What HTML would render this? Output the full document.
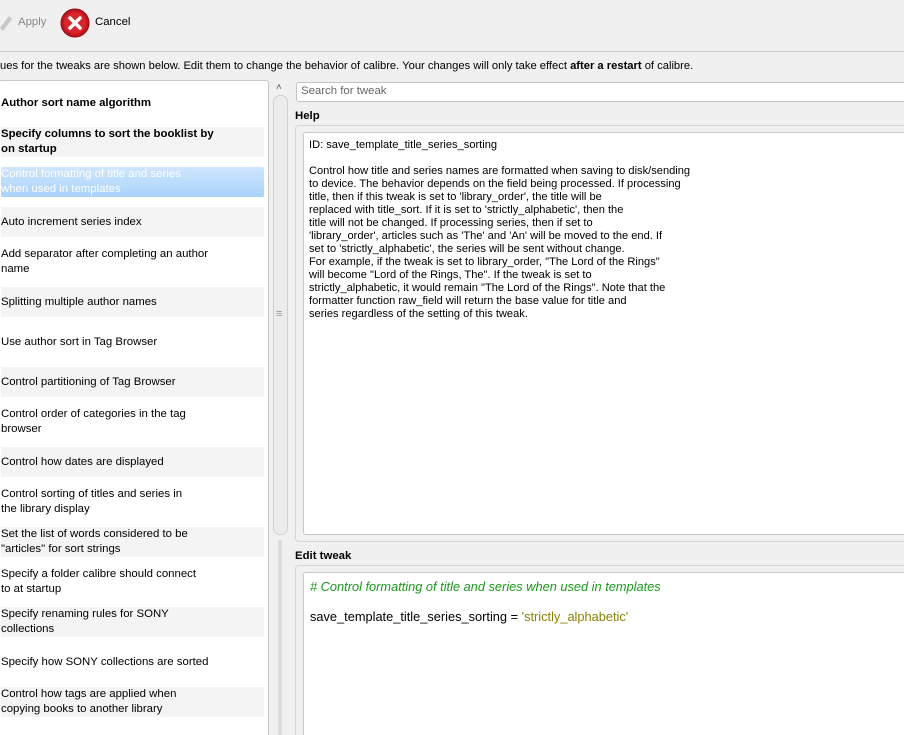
<!DOCTYPE html>
<html style="width:904px;height:735px;overflow:hidden"><head><style>
*{margin:0;padding:0;box-sizing:border-box}
body{width:904px;height:735px;overflow:hidden;background:#f0f0f0;font-family:"Liberation Sans",sans-serif;font-size:11.4px;color:#000;position:relative}
.abs{position:absolute}
.row{position:absolute;left:0;width:263px;height:30px;line-height:15px;display:flex;align-items:center;white-space:nowrap}
.sh{background:#f4f4f4}
.sel{background:linear-gradient(#cfe6fd,#a9d3fb);color:#fff;border-radius:2px}
</style></head><body>
<div class="abs" style="left:0;top:0;width:904px;height:52px;background:#f0f0f0;border-bottom:1px solid #c8c8c8"></div>
<svg class="abs" style="left:0;top:12px" width="14" height="22"><path d="M0 16 L9 4 L12 7 L3 19 Z" fill="#c8c8c8"/></svg>
<div class="abs" style="left:18px;top:16px;color:#888">Apply</div>
<svg class="abs" style="left:60px;top:8px" width="30" height="30"><circle cx="15" cy="15" r="14" fill="#c8141c" stroke="#8a0c10"/><circle cx="15" cy="15" r="11" fill="#d8262c"/><path d="M10 10 L20 20 M20 10 L10 20" stroke="#fff" stroke-width="3.5" stroke-linecap="round"/></svg>
<div class="abs" style="left:95px;top:16px">Cancel</div>
<div class="abs" style="left:0;top:60px;white-space:nowrap;font-size:11.2px">ues for the tweaks are shown below. Edit them to change the behavior of calibre. Your changes will only take effect <b>after a restart</b> of calibre.</div>
<div class="abs" style="left:-2px;top:80px;width:271px;height:660px;background:#fff;border:1px solid #c8c8c8;border-radius:3px;overflow:hidden">
<div style="position:relative;left:2px;top:-80px">
<div class="row" style="top:87px;font-weight:bold">Author sort name algorithm</div>
<div class="row sh" style="top:126px;font-weight:bold">Specify columns to sort the booklist by<br>on startup</div>
<div class="row sel" style="top:166px">Control formatting of title and series<br>when used in templates</div>
<div class="row sh" style="top:206px">Auto increment series index</div>
<div class="row" style="top:246px">Add separator after completing an author<br>name</div>
<div class="row sh" style="top:286px">Splitting multiple author names</div>
<div class="row" style="top:326px">Use author sort in Tag Browser</div>
<div class="row sh" style="top:366px">Control partitioning of Tag Browser</div>
<div class="row" style="top:406px">Control order of categories in the tag<br>browser</div>
<div class="row sh" style="top:446px">Control how dates are displayed</div>
<div class="row" style="top:486px">Control sorting of titles and series in<br>the library display</div>
<div class="row sh" style="top:526px">Set the list of words considered to be<br>"articles" for sort strings</div>
<div class="row" style="top:566px">Specify a folder calibre should connect<br>to at startup</div>
<div class="row sh" style="top:606px">Specify renaming rules for SONY<br>collections</div>
<div class="row" style="top:646px">Specify how SONY collections are sorted</div>
<div class="row sh" style="top:686px">Control how tags are applied when<br>copying books to another library</div>
<div class="row" style="top:726px">Set the maximum number of tags to show</div>
</div></div>
<div class="abs" style="left:276px;top:82px;font-size:10px;color:#555">&#x2c4;</div>
<div class="abs" style="left:273px;top:95px;width:15px;height:440px;border:1px solid #d0d0d0;border-radius:7px;background:#ececec"></div>
<div class="abs" style="left:276px;top:308px;color:#999;font-size:11px">≡</div>
<div class="abs" style="left:278px;top:540px;width:4px;height:200px;background:#ddd"></div>
<div class="abs" style="left:296px;top:82px;width:620px;height:20px;background:#fff;border:1px solid #c4c4c4;border-radius:3px;padding:2px 4px;color:#666">Search for tweak</div>
<div class="abs" style="left:295px;top:110px;font-weight:bold">Help</div>
<div class="abs" style="left:295px;top:125px;width:620px;height:417px;border:1px solid #d4d4d4;border-radius:4px"></div>
<div class="abs" style="left:303px;top:132px;width:610px;height:403px;background:#fff;border:1px solid #c8c8c8;border-radius:3px;padding:6px 5px;line-height:13px;font-size:11.1px;white-space:nowrap">ID: save_template_title_series_sorting<br><br>Control how title and series names are formatted when saving to disk/sending<br>to device. The behavior depends on the field being processed. If processing<br>title, then if this tweak is set to 'library_order', the title will be<br>replaced with title_sort. If it is set to 'strictly_alphabetic', then the<br>title will not be changed. If processing series, then if set to<br>'library_order', articles such as 'The' and 'An' will be moved to the end. If<br>set to 'strictly_alphabetic', the series will be sent without change.<br>For example, if the tweak is set to library_order, "The Lord of the Rings"<br>will become "Lord of the Rings, The". If the tweak is set to<br>strictly_alphabetic, it would remain "The Lord of the Rings". Note that the<br>formatter function raw_field will return the base value for title and<br>series regardless of the setting of this tweak.</div>
<div class="abs" style="left:295px;top:550px;font-weight:bold">Edit tweak</div>
<div class="abs" style="left:295px;top:565px;width:620px;height:180px;border:1px solid #d4d4d4;border-radius:4px"></div>
<div class="abs" style="left:303px;top:572px;width:610px;height:170px;background:#fff;border:1px solid #c8c8c8;border-radius:3px;padding:6px 6px;font-size:12.8px;line-height:15px;white-space:nowrap"><i style="color:#1a9a1a"># Control formatting of title and series when used in templates</i><br><br>save_template_title_series_sorting = <span style="color:#8a8000">'strictly_alphabetic'</span></div>
</body></html>
